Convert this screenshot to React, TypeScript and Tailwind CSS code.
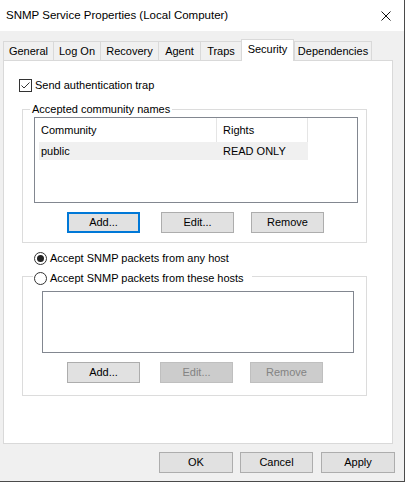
import React from 'react';

const tabs = [
  { label: 'General', w: 'w-[50px]' },
  { label: 'Log On', w: 'w-[47px]' },
  { label: 'Recovery', w: 'w-[58px]' },
  { label: 'Agent', w: 'w-[42px]' },
  { label: 'Traps', w: 'w-[41px]' },
  { label: 'Security', w: 'w-[53px]', active: true },
  { label: 'Dependencies', w: 'w-[78px]', last: true },
];

const Button = ({
  children,
  className = '',
  focused,
  disabled,
}: {
  children: React.ReactNode;
  className?: string;
  focused?: boolean;
  disabled?: boolean;
}) => (
  <button
    disabled={disabled}
    className={`h-[21px] flex items-center justify-center leading-none ${
      disabled
        ? 'bg-[#cccccc] border border-[#bfbfbf] text-[#838383]'
        : focused
        ? 'bg-[#e1e1e1] border-2 border-[#0078d7]'
        : 'bg-[#e1e1e1] border border-[#adadad]'
    } ${className}`}
  >
    {children}
  </button>
);

const Radio = ({ checked }: { checked?: boolean }) => (
  <span className="w-[13px] h-[13px] rounded-full border border-[#333333] bg-white flex items-center justify-center shrink-0">
    {checked && <span className="w-[7px] h-[7px] rounded-full bg-[#222222]" />}
  </span>
);

export default function App() {
  return (
    <div className="w-[405px] h-[482px] bg-[#f0f0f0] border-r border-b border-[#4a4a4a] flex flex-col text-[11px] text-black font-['Liberation_Sans',Arial,sans-serif] select-none">
      {/* title bar */}
      <div className="h-[31px] bg-white flex items-center justify-between pl-[6px] pr-[13px] shrink-0">
        <span className="text-[11.5px]">SNMP Service Properties (Local Computer)</span>
        <svg width="10" height="10" viewBox="0 0 10 10">
          <path d="M0.5 0.5 L9.5 9.5 M9.5 0.5 L0.5 9.5" stroke="#111" strokeWidth="1" />
        </svg>
      </div>

      <div className="px-[3px] pt-[8px] flex flex-col">
        {/* tabs */}
        <div className="flex items-end h-[21px]">
          {tabs.map((t) =>
            t.active ? (
              <div
                key={t.label}
                className={`${t.w} h-[22px] -mb-px relative z-10 bg-white border-t border-l border-r border-[#d9d9d9] flex items-center justify-center pb-[3px]`}
              >
                {t.label}
              </div>
            ) : (
              <div
                key={t.label}
                className={`${t.w} h-[19px] bg-[#f0f0f0] border-t border-l border-[#d9d9d9] ${
                  t.last ? 'border-r' : ''
                } flex items-center justify-center`}
              >
                {t.label}
              </div>
            )
          )}
        </div>

        {/* tab page */}
        <div className="w-[390px] h-[384px] bg-white border border-[#d9d9d9] flex flex-col">
          <div className="mt-[18px] ml-[15px] flex items-center gap-[3px] h-[13px]">
            <span className="w-[13px] h-[13px] border border-[#333333] bg-white flex items-center justify-center">
              <svg width="11" height="11" viewBox="0 0 11 11">
                <polyline points="1.5,5.5 4,8 9.5,2.5" fill="none" stroke="#333" strokeWidth="1" />
              </svg>
            </span>
            <span>Send authentication trap</span>
          </div>

          {/* community group */}
          <div className="relative mt-[17px] ml-[18px] w-[345px] h-[134px] border border-[#dcdcdc] pt-[7px] pl-[11px]">
            <span className="absolute left-[7px] -top-[9px] leading-[16px] bg-white px-[2px]">
              Accepted community names
            </span>
            <div className="w-[324px] h-[86px] border border-[#828790] bg-white">
              <div className="flex h-[24px]">
                <div className="w-[182px] border-r border-[#e5e5e5] flex items-center pl-[6px]">Community</div>
                <div className="w-[91px] border-r border-[#e5e5e5] flex items-center pl-[6px]">Rights</div>
              </div>
              <div className="ml-[4px] w-[269px] h-[18px] bg-[#f0f0f0] flex items-center">
                <span className="w-[178px] pl-[2px]">public</span>
                <span className="pl-[6px]">READ ONLY</span>
              </div>
            </div>
            <div className="flex mt-[9px]">
              <Button focused className="ml-[33px] w-[73px]">Add...</Button>
              <Button className="ml-[21px] w-[73px]">Edit...</Button>
              <Button className="ml-[17px] w-[73px]">Remove</Button>
            </div>
          </div>

          <div className="mt-[9px] ml-[30px] flex items-center gap-[3px] h-[13px]">
            <Radio checked />
            <span>Accept SNMP packets from any host</span>
          </div>

          {/* hosts group */}
          <div className="relative mt-[11px] ml-[18px] w-[345px] h-[120px] border border-[#dcdcdc] pt-[14px] pl-[19px]">
            <div className="absolute left-[10px] -top-[5px] h-[13px] bg-white pl-[1px] pr-[8px] flex items-center gap-[3px]">
              <Radio />
              <span>Accept SNMP packets from these hosts</span>
            </div>
            <div className="w-[312px] h-[62px] border border-[#828790] bg-white" />
            <div className="flex mt-[9px]">
              <Button className="ml-[25px] w-[73px]">Add...</Button>
              <Button disabled className="ml-[20px] w-[73px]">Edit...</Button>
              <Button disabled className="ml-[17px] w-[73px]">Remove</Button>
            </div>
          </div>
        </div>

        {/* dialog buttons */}
        <div className="flex justify-end mt-[8px] mr-[6px]">
          <Button className="w-[74px]">OK</Button>
          <Button className="w-[73px] ml-[7px]">Cancel</Button>
          <Button className="w-[74px] ml-[8px]">Apply</Button>
        </div>
      </div>
    </div>
  );
}
